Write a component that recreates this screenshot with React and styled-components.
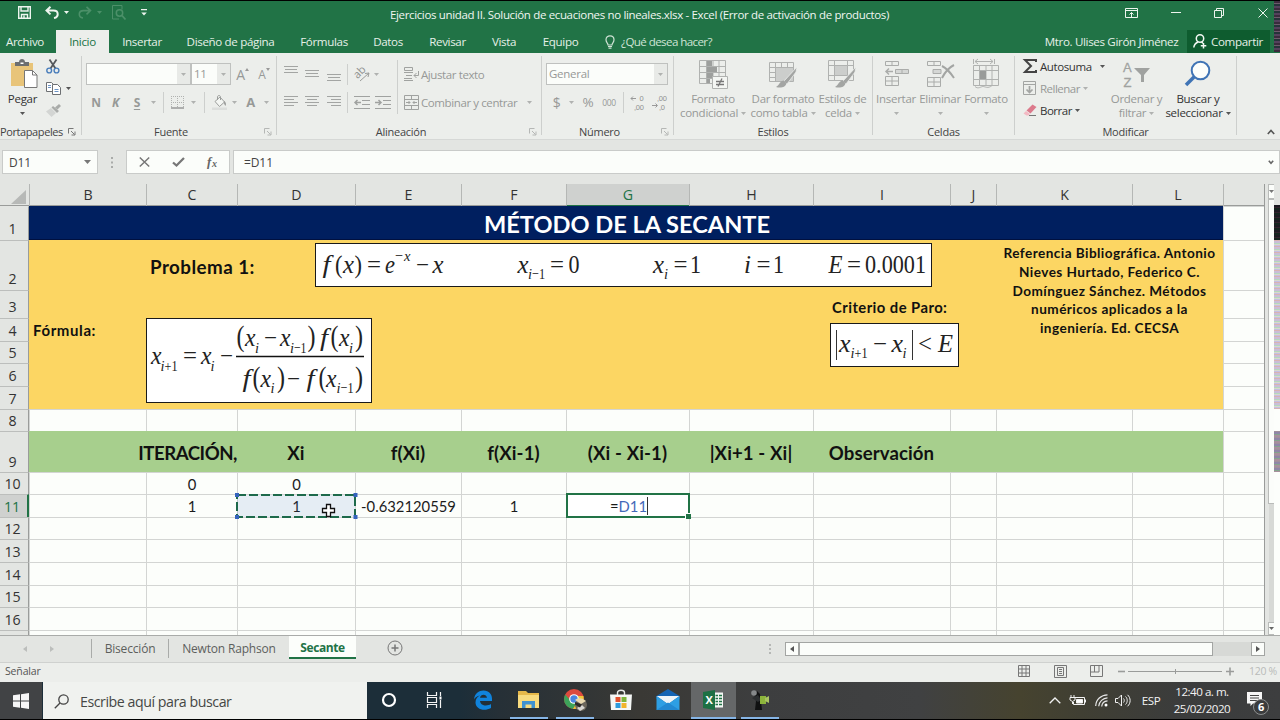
import styled, { createGlobalStyle, css } from "styled-components";

const GlobalStyle = createGlobalStyle`
  * {
    box-sizing: border-box;
  }

  body {
    margin: 0;
    background: #000;
    font-family: "Open Sans", "Noto Sans", sans-serif;
    overflow: hidden;
  }

  svg {
    display: block;
    flex: none;
    overflow: visible;
  }
`;

const GREEN = "#217346";
const RIBBON = "#eceeeb";
const CHROME = "#e3e5e2";
const DIM = "#979997";

const Screen = styled.div`
  position: relative;
  display: flex;
  flex-direction: column;
  width: 1280px;
  height: 720px;
  padding: 1px 0;
  overflow: hidden;
`;

/* A fixed-width place in a bar, with its content centred */
const Slot = styled.div`
  display: flex;
  align-items: center;
  justify-content: ${(p) => p.$align || "center"};
  flex: none;
  width: ${(p) => p.$w}px;
  height: ${(p) => (p.$h ? `${p.$h}px` : "auto")};
  margin-left: ${(p) => p.$ml || 0}px;
  white-space: nowrap;
`;

/* ---------- title bar and tabs ---------- */

const TitleBar = styled.div`
  display: flex;
  align-items: center;
  height: 29px;
  padding-bottom: 6px;
  background: ${GREEN};
  color: #f0f6f1;
`;

const WindowTitle = styled.div`
  flex: 1;
  padding: 4px 0 0 6px;
  font-size: 11.5px;
  letter-spacing: -0.35px;
  text-align: center;
  white-space: nowrap;
`;

const TabBar = styled.div`
  display: flex;
  height: 23px;
  background: ${GREEN};
  color: #e6f0e8;
  font-size: 11.6px;
  letter-spacing: -0.35px;
  line-height: 22px;
`;

const Tab = styled(Slot)`
  ${(p) =>
    p.$active &&
    css`
      background: ${RIBBON};
      color: ${GREEN};
    `}
`;

const TellMe = styled.div`
  display: flex;
  align-items: center;
  gap: 6px;
  flex: 1;
  padding-left: 11px;
  color: #cfe3d5;
  letter-spacing: -0.6px;
`;

const ShareButton = styled.div`
  display: flex;
  align-items: center;
  gap: 4px;
  width: 83px;
  margin: 0 10px 0 10px;
  padding-left: 6px;
  background: #0e5c2f;
`;

/* ---------- ribbon ---------- */

const Ribbon = styled.div`
  display: flex;
  height: 86px;
  background: ${RIBBON};
  color: #444;
  font-size: 11.5px;
  letter-spacing: -0.28px;
`;

const Group = styled.div`
  display: flex;
  flex-direction: column;
  flex: none;
  width: ${(p) => p.$w}px;
`;

const GroupBody = styled.div`
  display: flex;
  height: 71px;
  padding-left: ${(p) => p.$pl || 0}px;
`;

const GroupFooter = styled.div`
  display: flex;
  align-items: center;
  height: 15px;
  font-size: 11px;
  letter-spacing: ${(p) => p.$ls ?? -0.25}px;
  line-height: 15px;
`;

const GroupLabel = styled.div`
  flex: 1;
  text-align: center;
  white-space: nowrap;
`;

const Divider = styled.div`
  flex: none;
  width: 1px;
  height: ${(p) => p.$h || 79}px;
  margin-top: ${(p) => p.$mt ?? 3}px;
  background: #cdcfcd;
`;

const Stack = styled.div`
  display: flex;
  flex-direction: column;
  flex: none;
  gap: ${(p) => p.$gap ?? 6}px;
  width: ${(p) => (p.$w ? `${p.$w}px` : "auto")};
  padding-top: ${(p) => p.$pt ?? 10}px;
`;

const Line = styled.div`
  display: flex;
  align-items: center;
  gap: ${(p) => p.$gap || 0}px;
  height: 22px;
  color: ${(p) => (p.$on ? "#333" : DIM)};
  letter-spacing: ${(p) => p.$ls ?? -0.28}px;
  white-space: nowrap;
`;

const Combo = styled.div`
  display: flex;
  width: ${(p) => p.$w}px;
  height: 22px;
  border: 1px solid #bfc1bf;
  background: #fbfdfa;
`;

const ComboText = styled.div`
  flex: 1;
  padding-left: 2px;
  line-height: 20px;
  color: #979997;
`;

const ComboArrow = styled.div`
  display: flex;
  align-items: center;
  justify-content: center;
  width: 13px;
  background: #e8eae7;
`;

const Letter = styled.span`
  font-size: ${(p) => p.$size || 13}px;
  font-weight: ${(p) => (p.$bold ? 700 : 400)};
  font-style: ${(p) => (p.$italic ? "italic" : "normal")};
  text-decoration: ${(p) => (p.$under ? "underline" : "none")};
  text-underline-offset: 2px;
`;

const BigButton = styled.div`
  display: flex;
  flex-direction: column;
  align-items: center;
  flex: none;
  width: ${(p) => p.$w}px;
  padding-top: 6px;
  color: ${(p) => (p.$on ? "#333" : DIM)};
  line-height: 14px;
  white-space: nowrap;
`;

const BigIcon = styled.div`
  display: flex;
  align-items: center;
  height: 33px;
  padding-bottom: 3px;
`;

const ButtonLine = styled.div`
  display: flex;
  align-items: center;
  gap: 3px;
  height: 14px;
`;

/* ---------- formula bar ---------- */

const FormulaBar = styled.div`
  display: flex;
  height: 45px;
  padding: 10px 0 10px 2px;
  border-top: 1px solid #d6d8d6;
  background: ${CHROME};
  color: #444;
  font-size: 12px;
  letter-spacing: -0.1px;
`;

const Field = styled.div`
  display: flex;
  align-items: center;
  justify-content: space-between;
  width: ${(p) => (p.$w ? `${p.$w}px` : "auto")};
  flex: ${(p) => (p.$w ? "none" : 1)};
  height: 24px;
  margin-left: ${(p) => p.$ml || 0}px;
  padding: ${(p) => p.$pad};
  border: 1px solid #c9cbc9;
  background: #fbfdfa;
`;

/* ---------- sheet ---------- */

const COLS = "29px 117px 91px 118px 106px 105px 123px 124px 137px 46px 136px 91px 41px";
const ROWS = "34px 50px 28px 23px 22px 23px 23px 22px 41px 22px 23px 22px 23px 23px 22px 23px 5px";

const SheetArea = styled.div`
  display: flex;
  height: 451px;
  background: ${CHROME};
`;

const SheetBox = styled.div`
  width: 1265px;
  border-right: 1px solid #9a9c9a;
`;

const ColumnHeader = styled.div`
  display: grid;
  grid-template-columns: ${COLS};
  height: 22px;
  border-bottom: 1px solid #9a9c9a;
`;

const HeadCell = styled.div`
  border-left: 1px solid #b5b7b5;
  color: ${(p) => (p.$active ? GREEN : "#333")};
  font-size: 14.2px;
  line-height: 21px;
  text-align: center;
  ${(p) =>
    p.$active &&
    css`
      background: #cfd1cf;
      border-bottom: 2px solid ${GREEN};
    `}
`;

const Corner = styled.div`
  display: flex;
  align-items: flex-end;
  justify-content: flex-end;
  padding: 0 3px 3px 0;
`;

const Grid = styled.div`
  position: relative;
  display: grid;
  grid-template-columns: ${COLS};
  grid-template-rows: ${ROWS};
  height: 429px;
  background: #fcfefb;
  font-family: Lato, "Open Sans", sans-serif;
  font-size: 14.8px;
  color: #1b1b1b;
`;

const RowHead = styled.div`
  display: flex;
  align-items: flex-end;
  justify-content: center;
  grid-column: 1;
  grid-row: ${(p) => p.$row};
  padding-right: 3px;
  border-top: 1px solid ${(p) => (p.$row === 1 ? "transparent" : "#bcbebc")};
  border-right: ${(p) => (p.$active ? `2px solid ${GREEN}` : "1px solid #9a9c9a")};
  background: ${(p) => (p.$active ? "#cfd1cf" : CHROME)};
  color: ${(p) => (p.$active ? GREEN : "#333")};
  font-family: "Open Sans", sans-serif;
  font-size: 14.2px;
  line-height: ${(p) => (p.$row < 4 ? 22 : 20)}px;
  overflow: hidden;
`;

const Cell = styled.div`
  display: flex;
  align-items: center;
  justify-content: center;
  grid-column: ${(p) => p.$col};
  grid-row: ${(p) => p.$row};
  border-left: 1px solid #d3d5d3;
  border-top: 1px solid #d3d5d3;
  white-space: nowrap;
`;

const Band = styled.div`
  display: flex;
  align-items: center;
  justify-content: center;
  grid-column: 2 / 13;
  grid-row: ${(p) => p.$row};
  background: ${(p) => p.$bg};
`;

const SheetTitle = styled(Band)`
  padding: 3px 0 0 2px;
  border-bottom: 1px solid #00103f;
  color: #fff;
  font-size: 23.6px;
  font-weight: 700;
`;

const Caption = styled.div`
  grid-column: ${(p) => p.$col};
  grid-row: ${(p) => p.$row};
  padding: ${(p) => p.$pad};
  color: #111;
  font-size: ${(p) => p.$size}px;
  font-weight: 700;
  letter-spacing: ${(p) => p.$ls || 0}px;
  line-height: ${(p) => p.$lh || 22}px;
  text-align: ${(p) => p.$align || "left"};
  white-space: nowrap;
`;

const TableHead = styled.div`
  display: flex;
  align-items: center;
  justify-content: ${(p) => (p.$end ? "flex-end" : "center")};
  grid-column: ${(p) => p.$col};
  grid-row: 9;
  padding-top: 2px;
  color: #111;
  font-size: 18.6px;
  font-weight: 700;
  letter-spacing: ${(p) => (p.$end ? -0.45 : 0.1)}px;
  white-space: nowrap;
`;

/* Objects that float above the cells */
const Floating = styled.div`
  position: absolute;
  left: ${(p) => p.$x}px;
  top: ${(p) => p.$y - 206}px;
  width: ${(p) => p.$w}px;
  height: ${(p) => p.$h}px;
`;

const EquationBox = styled(Floating)`
  border: 1px solid #1a1a1a;
  background: #fff;
`;

const EditBox = styled(Floating)`
  display: flex;
  align-items: center;
  justify-content: center;
  padding: 1px 0 0 2px;
  border: 2px solid ${GREEN};
  background: #fff;

  &::after {
    content: "";
    position: absolute;
    right: -3px;
    bottom: -3px;
    width: 5px;
    height: 5px;
    background: ${GREEN};
    border: 1px solid #fff;
    border-width: 1px 0 0 1px;
  }
`;

const CellRef = styled.span`
  border-right: 1px solid #333;
  color: #4468b8;
`;

const ScrollColumn = styled.div`
  display: flex;
  flex-direction: column;
  width: 6px;
  margin-left: 3px;
`;

const ScrollPart = styled.div`
  display: flex;
  align-items: center;
  justify-content: center;
  height: ${(p) => p.$h}px;
  margin-left: ${(p) => (p.$track ? 1 : 0)}px;
  border: ${(p) => (p.$track ? "none" : "1px solid #b9bbb9")};
  border-right: none;
  background: ${(p) => (p.$track ? "#d7d9d6" : "#fbfdfa")};
`;

/* ---------- capture noise along the right edge ---------- */

const EdgeStrip = styled.div`
  position: absolute;
  right: 0;
  top: 1px;
  width: 6px;
  display: flex;
  flex-direction: column;
`;

const stripes = {
  plain: "transparent",
  white: "#fcfefb",
  dark: "repeating-linear-gradient(#1d1c22 0 2px, #33222c 2px 3px, #16261f 3px 5px)",
  busy: "repeating-linear-gradient(#3a2b3d 0 2px, #6d5a6b 2px 3px, #26333a 3px 5px, #54415c 5px 7px)",
  pale: "repeating-linear-gradient(#d9b3b3 0 1px, #c9bed8 1px 3px, #b3d8bd 3px 4px, #d8d8cc 4px 5px, #c4bfe2 5px 6px)",
  muted: "repeating-linear-gradient(#9f8f9c 0 1px, #8f86a8 1px 3px, #84a48c 3px 4px, #a88f9c 4px 6px)",
};

const Stripe = styled.div`
  height: ${(p) => p.$h}px;
  background: ${(p) => stripes[p.$kind]};
`;

/* ---------- sheet tabs and status ---------- */

const SheetTabs = styled.div`
  display: flex;
  height: 28px;
  border-top: 1px solid #a9aba9;
  border-bottom: 1px solid #cfd1cf;
  background: ${CHROME};
  color: #5d5f5d;
  font-size: 12px;
  letter-spacing: -0.18px;
  line-height: 22px;
`;

const SheetTab = styled(Slot)`
  height: 23px;
  padding-top: 2px;
  ${(p) =>
    p.$active &&
    css`
      border-bottom: 2px solid ${GREEN};
      background: #fcfefb;
      color: ${GREEN};
      font-weight: 700;
      letter-spacing: -0.4px;
    `}
`;

const TabRule = styled.div`
  width: 1px;
  height: 19px;
  margin-top: 3px;
  background: #a9aba9;
`;

const HScroll = styled.div`
  display: flex;
  width: 480px;
  height: 14px;
  margin-top: 6px;
  background: #d7d9d6;
`;

const HPart = styled.div`
  display: flex;
  align-items: center;
  justify-content: center;
  width: ${(p) => p.$w}px;
  margin-left: ${(p) => p.$ml || 0}px;
  border: 1px solid #a3a5a3;
  background: #fbfdfa;
`;

const StatusBar = styled.div`
  display: flex;
  align-items: center;
  height: 19px;
  padding-bottom: 3px;
  background: ${RIBBON};
  color: #555;
  font-size: 10.5px;
`;

const StatusText = styled.div`
  flex: 1;
  padding-left: 5px;
  letter-spacing: -0.15px;
`;

const Zoom = styled.div`
  width: 42px;
  padding-left: 11px;
  color: #b9bbb9;
  letter-spacing: -0.3px;
  white-space: nowrap;
`;

/* ---------- taskbar ---------- */

const Taskbar = styled.div`
  display: flex;
  height: 37px;
  background: linear-gradient(
    90deg,
    #1c2e39 0 460px,
    #263037 500px,
    #3a3935 640px,
    #3d3e3f 760px,
    #404142 920px,
    #46432f 1020px,
    #403f33 1080px,
    #3b3c3c 1180px,
    #3d3e3f 1280px
  );
`;

const StartButton = styled(Slot)`
  background: #414345;
`;

const SearchBox = styled.div`
  display: flex;
  align-items: center;
  gap: 11px;
  width: 324px;
  margin-left: 1px;
  padding: 1px 0 0 11px;
  background: #f0f2ef;
  color: #454745;
  font-size: 14.2px;
  letter-spacing: -0.45px;
`;

const TaskItem = styled(Slot)`
  background: ${(p) => (p.$active ? "#656768" : "none")};
  border-bottom: 2px solid ${(p) => (p.$open ? "#86b5e6" : "transparent")};
`;

const Tray = styled.div`
  display: flex;
  flex: 1;
  justify-content: flex-end;
  align-items: center;
  color: #f2f2f2;
  font-size: 11.6px;
  letter-spacing: -0.5px;
`;

const Clock = styled.div`
  display: flex;
  flex-direction: column;
  align-items: center;
  width: 72px;
  padding-bottom: 1px;
  line-height: 17px;
  white-space: nowrap;
`;

/* ---------- drawings ---------- */

const Svg = ({ w, h, color = "currentColor", sw = 1, children }) => (
  <svg
    width={w}
    height={h}
    viewBox={`0 0 ${w} ${h}`}
    fill="none"
    stroke={color}
    strokeWidth={sw}
  >
    {children}
  </svg>
);

const Arrow = ({ color = "#b0b2b0" }) => (
  <svg width="5" height="3" viewBox="0 0 5 3">
    <path d="M0 0h5L2.500 3z" fill={color} />
  </svg>
);

const Launcher = ({ color = "#999" }) => (
  <Svg w={8} h={8} color={color}>
    <path d="M.5 5.500v-5h5M3 3l3.500 3.500M7 3.500v3.500H3.500" />
  </Svg>
);

const Bars = ({ rows }) => (
  <Svg w={14} h={18} color="#a3a5a3">
    {rows.map(([x1, x2, y]) => (
      <path key={y} d={`M${x1} ${y + 0.5}H${x2}`} />
    ))}
  </Svg>
);

const Brush = () => (
  <g stroke="none">
    <path d="M28 7L15 21l3 3 9-12z" fill="#a3a5a3" stroke="#ecefec" strokeWidth=".8" />
    <path d="M15 20.500c-4 0-4 4-8 6.500 5 1.500 10 0 10.500-4z" fill="#a3a5a3" />
  </g>
);

const Indent = ({ flip }) => (
  <Svg w={16} h={13} color="#a0a2a0">
    <path d="M0 .5h16M8 4.500h8M8 8.500h8M0 12.500h16" />
    <path
      d={flip ? "M0 6.500h6M3.500 4l2.500 2.500L3.500 9" : "M1 6.500h6M3.500 4L1 6.500 3.500 9"}
      strokeWidth="1.500"
    />
  </Svg>
);

/* text runs of a formula: [text, x, baseline, size, width, upright] */
const Equation = ({ x, y, w, h, runs, children }) => (
  <EquationBox $x={x} $y={y} $w={w} $h={h}>
    <svg
      width={w - 2}
      height={h - 2}
      viewBox={`${x + 1} ${y + 1} ${w - 2} ${h - 2}`}
      fontFamily="'Liberation Serif', serif"
      fill="#222"
    >
      {runs.map(([t, tx, ty, size, len, upright], i) => (
        <text
          key={i}
          x={tx}
          y={ty}
          fontSize={size}
          fontStyle={upright ? "normal" : "italic"}
          textLength={len}
          lengthAdjust="spacingAndGlyphs"
        >
          {t}
        </text>
      ))}
      {children}
    </svg>
  </EquationBox>
);

const PROBLEM = [
  ["f", 322.5, 272.5, 26, 8],
  ["(", 335, 272.5, 26, 7.5, true],
  ["x", 343, 272.5, 25, 11],
  [")", 354.5, 272.5, 26, 7.5, true],
  ["=", 367, 272.5, 25, 14, true],
  ["e", 385, 272.5, 25, 10],
  ["−", 395, 260.5, 16, 8, true],
  ["x", 404, 260.5, 15, 6.5],
  ["−", 416, 272.5, 25, 13, true],
  ["x", 432.5, 272.5, 25, 11],
  ["x", 517.5, 272.5, 25, 11],
  ["i", 528, 279, 15.5, 4],
  ["−1", 532, 279, 15.5, 13, true],
  ["=", 550, 272.5, 25, 14, true],
  ["0", 568.5, 272.5, 25, 11, true],
  ["x", 653, 272.5, 25, 11],
  ["i", 664, 279, 15.5, 4],
  ["=", 673.5, 272.5, 25, 14, true],
  ["1", 690, 272.5, 25, 11, true],
  ["i", 744, 272.5, 25, 7],
  ["=", 756.5, 272.5, 25, 14, true],
  ["1", 773, 272.5, 25, 11, true],
  ["E", 828.5, 272.5, 25, 14],
  ["=", 847, 272.5, 25, 14, true],
  ["0.0001", 865, 272.5, 25, 61, true],
];

const SECANT = [
  ["x", 151, 364, 25, 10.5],
  ["i", 160.5, 371, 15.5, 4],
  ["+1", 164.5, 371, 15.5, 13, true],
  ["=", 183, 364, 25, 14, true],
  ["x", 201, 364, 25, 10.5],
  ["i", 210.5, 371, 15.5, 4],
  ["−", 220, 364, 25, 13, true],
  ["(", 236.5, 346, 29, 8, true],
  ["x", 245, 346, 25, 10.5],
  ["i", 255, 352.5, 15.5, 4],
  ["−", 264, 346, 25, 13, true],
  ["x", 280, 346, 25, 10.5],
  ["i", 290, 352.5, 15.5, 4],
  ["−1", 294, 352.5, 15.5, 12.5, true],
  [")", 307.5, 346, 29, 8, true],
  ["f", 320, 346, 26, 8],
  ["(", 330.5, 346, 29, 8, true],
  ["x", 339, 346, 25, 10.5],
  ["i", 349, 352.5, 15.5, 4],
  [")", 355, 346, 29, 8, true],
  ["f", 242.5, 386.5, 26, 8],
  ["(", 252.5, 386.5, 29, 8, true],
  ["x", 260.5, 386.5, 25, 10.5],
  ["i", 270.5, 393, 15.5, 4],
  [")", 277, 386.5, 29, 8, true],
  ["−", 287, 386.5, 25, 13, true],
  ["f", 306.5, 386.5, 26, 8],
  ["(", 318.5, 386.5, 29, 8, true],
  ["x", 326, 386.5, 25, 10.5],
  ["i", 336.5, 393, 15.5, 4],
  ["−1", 340.5, 393, 15.5, 13, true],
  [")", 355, 386.5, 29, 8, true],
];

const STOP = [
  ["x", 839, 352, 26, 11.5],
  ["i", 850.5, 358, 15.5, 4],
  ["+1", 854.5, 358, 15.5, 13, true],
  ["−", 873, 352, 25, 14, true],
  ["x", 891.5, 352, 26, 11.5],
  ["i", 902.5, 358, 15.5, 4],
  ["<", 918, 352, 25, 14, true],
  ["E", 938, 352, 26, 15],
];

/* ---------- content ---------- */

const LETTERS = ["B", "C", "D", "E", "F", "G", "H", "I", "J", "K", "L"];
const OPEN_ROWS = [8, 10, 11, 12, 13, 14, 15, 16, 17];
const VALUES = {
  "10-3": "0",
  "10-4": "0",
  "11-3": "1",
  "11-4": "1",
  "11-5": "-0.632120559",
  "11-6": "1",
};
const HEADINGS = ["ITERACIÓN,", "Xi", "f(Xi)", "f(Xi-1)", "(Xi - Xi-1)", "|Xi+1 - Xi|", "Observación"];

const TABS = [
  ["Archivo", 50, 0],
  ["Inicio", 53, 6],
  ["Insertar", 66, 0],
  ["Diseño de página", 111, 0],
  ["Fórmulas", 76, 0],
  ["Datos", 52, 0],
  ["Revisar", 67, 0],
  ["Vista", 46, 0],
  ["Equipo", 67, 0],
];

const QuickAccess = () => (
  <>
    <Slot $w={15} $ml={17}>
      <Svg w={13} h={13} color="#eef5ef" sw={1.4}>
        <path d="M.7.700h11.600v11.600H.7zM3 1v4h7V1M3.500 12V8.500h6V12M6 9.500v2.500" />
      </Svg>
    </Slot>
    <Slot $w={16} $ml={12}>
      <Svg w={14} h={13} color="#eef5ef" sw={2}>
        <path d="M5.500.800L1.500 4.600l4 3.800M2 4.600h6.500c5.500 0 5.500 6.500.5 7.400" />
      </Svg>
    </Slot>
    <Slot $w={12}>
      <Arrow color="#eef5ef" />
    </Slot>
    <Slot $w={15} $ml={5}>
      <Svg w={14} h={13} color="#4c9069" sw={1.6}>
        <path d="M8.500.800l4 3.800-4 3.800M12 4.600H5.500c-5.500 0-5.500 6.500-.5 7.400" />
      </Svg>
    </Slot>
    <Slot $w={14}>
      <Arrow color="#4c9069" />
    </Slot>
    <Slot $w={15} $ml={5}>
      <Svg w={14} h={15} color="#4c9069">
        <path d="M10 4.500V.500H.5v13.500H7" />
        <circle cx="7.500" cy="8" r="3.200" strokeWidth="1.500" />
        <path d="M10 10.500l3.500 4" strokeWidth="1.800" />
      </Svg>
    </Slot>
    <Slot $w={12} $ml={12}>
      <Svg w={6} h={7} color="none">
        <path d="M0 0h6v1.300H0zM.3 3.500h5.500L3 6.500z" fill="#eef5ef" />
      </Svg>
    </Slot>
  </>
);

const ClipboardGroup = () => (
  <Group $w={81}>
    <GroupBody>
      <BigButton $w={45} $on>
        <BigIcon>
          <Svg w={28} h={30} color="none">
            <path d="M2 4h22v23H2z" fill="#e8c479" />
            <path d="M6 3h4c0-4 6-4 6 0h4v4H6z" fill="#6c6e70" />
            <path d="M11.500 3.500h3v1.500h-3z" fill="#fff" />
            <path d="M15.500 11.500h8l4.500 4.500v12.500H15.500z" fill="#fff" stroke="#777" />
            <path d="M23.500 11.500V16H28" stroke="#777" />
          </Svg>
        </BigIcon>
        <ButtonLine>Pegar</ButtonLine>
        <ButtonLine>
          <Arrow color="#555" />
        </ButtonLine>
      </BigButton>
      <Stack $pt={2} $gap={0}>
        <Line>
          <Slot $w={16}>
            <Svg w={14} h={15} color="#55585c" sw={1.4}>
              <path d="M3.500.500l6 9M10.500.500l-6 9" strokeWidth="1.800" />
              <circle cx="3.200" cy="11.500" r="2.400" stroke="#4a7ebb" />
              <circle cx="10.500" cy="11.500" r="2.400" stroke="#4a7ebb" />
            </Svg>
          </Slot>
        </Line>
        <Line>
          <Slot $w={16}>
            <Svg w={15} h={14} color="#6d7073">
              <path d="M.5 1.500h5l2 2v7H.5z" fill="#fff" />
              <path d="M6.500 3.500h5l3 3v7h-8z" fill="#fff" />
              <path d="M2 4.500h3M2 6.500h3M8.500 8.500h4M8.500 10.500h4" stroke="#6a93c4" />
            </Svg>
          </Slot>
          <Slot $w={14}>
            <Arrow color="#555" />
          </Slot>
        </Line>
        <Line>
          <Slot $w={16}>
            <Svg w={15} h={13} color="none">
              <path d="M0 7.500L5 4l5 5-4.500 4z" fill="#d3d5d3" />
              <path d="M5.500 3.500L7 2l6 5-2 2z" fill="#a9aba9" />
              <path d="M9 3.500L13 0l2 2-3.500 3.500z" fill="#a9aba9" />
            </Svg>
          </Slot>
        </Line>
      </Stack>
    </GroupBody>
    <GroupFooter $ls={-0.4}>
      <GroupLabel>Portapapeles</GroupLabel>
      <Slot $w={18}>
        <Launcher color="#777" />
      </Slot>
    </GroupFooter>
  </Group>
);

const FontGroup = () => (
  <Group $w={194}>
    <GroupBody $pl={4}>
      <Stack>
        <Line>
          <Combo $w={105}>
            <ComboText />
            <ComboArrow>
              <Arrow />
            </ComboArrow>
          </Combo>
          <Combo $w={40}>
            <ComboText>11</ComboText>
            <ComboArrow>
              <Arrow />
            </ComboArrow>
          </Combo>
          <Slot $w={23}>
            <Letter $size={14}>A</Letter>
            <Svg w={4} h={12} color="none">
              <path d="M0 3l2-3 2 3z" fill="#999" />
            </Svg>
          </Slot>
          <Slot $w={20}>
            <Letter $size={12}>A</Letter>
            <Svg w={4} h={12} color="none">
              <path d="M0 0h4L2 3z" fill="#999" />
            </Svg>
          </Slot>
        </Line>
        <Line>
          <Slot $w={20}>
            <Letter $size={12} $bold>N</Letter>
          </Slot>
          <Slot $w={19}>
            <Letter $size={12} $bold $italic>K</Letter>
          </Slot>
          <Slot $w={24}>
            <Letter $size={12} $bold $under>S</Letter>
          </Slot>
          <Slot $w={8}>
            <Arrow />
          </Slot>
          <Slot $w={13}>
            <Divider $h={21} $mt={0} />
          </Slot>
          <Slot $w={15}>
            <Svg w={13} h={13} color="#b0b2b0">
              <path d="M.5 0v11M6.500 0v11M12.500 0v11M0 .5h13M0 6.500h13" strokeDasharray="1 1" />
              <path d="M0 12h13" stroke="#999" strokeWidth="1.500" />
            </Svg>
          </Slot>
          <Slot $w={16}>
            <Arrow />
          </Slot>
          <Slot $w={7}>
            <Divider $h={21} $mt={0} />
          </Slot>
          <Slot $w={22}>
            <Svg w={15} h={15} color="#9c9e9c">
              <path d="M3 6.500L8 2l4.500 5-5 4.500z" fill="#f4f6f3" />
              <path d="M5.500 5V2c0-2 3-2 3 0v3" />
              <path d="M12 6c2 1 2.500 3 1.500 5-1-1-2-3-1.500-5z" fill="#9c9e9c" stroke="none" />
              <path d="M0 12.500h15V15H0z" fill="#dcdedc" stroke="none" />
            </Svg>
          </Slot>
          <Slot $w={8}>
            <Arrow />
          </Slot>
          <Slot $w={25}>
            <Letter $size={13} $bold>A</Letter>
          </Slot>
          <Slot $w={7}>
            <Arrow />
          </Slot>
        </Line>
      </Stack>
    </GroupBody>
    <GroupFooter>
      <GroupLabel>Fuente</GroupLabel>
      <Slot $w={16}>
        <Launcher color="#b5b7b5" />
      </Slot>
    </GroupFooter>
  </Group>
);

const AlignGroup = () => (
  <Group $w={264}>
    <GroupBody $pl={3}>
      <Stack $w={117}>
        <Line>
          <Slot $w={21}>
            <Bars rows={[[0, 14, 1], [1, 13, 4], [0, 14, 7]]} />
          </Slot>
          <Slot $w={22}>
            <Bars rows={[[0, 14, 5], [1, 13, 8], [0, 14, 11]]} />
          </Slot>
          <Slot $w={21}>
            <Bars rows={[[0, 14, 9], [1, 13, 12], [0, 14, 15]]} />
          </Slot>
          <Slot $w={6}>
            <Divider $h={21} $mt={0} />
          </Slot>
          <Slot $w={23}>
            <svg width="16" height="15" viewBox="0 0 16 15">
              <text x="1" y="10" fontSize="11" fill="#8f918f" transform="rotate(-45 5 8)">
                ab
              </text>
              <path d="M6 14l9-8M15 6l-1 4M15 6l-4 .5" stroke="#9a9c9a" fill="none" />
            </svg>
          </Slot>
          <Slot $w={6}>
            <Arrow />
          </Slot>
        </Line>
        <Line>
          <Slot $w={21}>
            <Bars rows={[[0, 14, 3], [0, 10, 6], [0, 14, 9], [0, 10, 12]]} />
          </Slot>
          <Slot $w={22}>
            <Bars rows={[[0, 14, 3], [2, 12, 6], [0, 14, 9], [2, 12, 12]]} />
          </Slot>
          <Slot $w={21}>
            <Bars rows={[[0, 14, 3], [4, 14, 6], [0, 14, 9], [4, 14, 12]]} />
          </Slot>
          <Slot $w={6}>
            <Divider $h={21} $mt={0} />
          </Slot>
          <Slot $w={24}>
            <Indent />
          </Slot>
          <Slot $w={18}>
            <Indent flip />
          </Slot>
        </Line>
      </Stack>
      <Divider $h={54} $mt={7} />
      <Stack>
        <Line $gap={2} $ls={-0.4}>
          <Slot $w={16} $ml={5}>
            <Svg w={15} h={14} color="#a0a2a0">
              <path d="M.5.500h8v3h-8zM0 5.500h9M2 8.500h6M0 11.500h8M0 13.500h9" />
              <path d="M14.500 4v4.500H10M12.500 6L10 8.500l2.500 2.500" />
            </Svg>
          </Slot>
          Ajustar texto
        </Line>
        <Line $gap={2} $ls={-0.4}>
          <Slot $w={16} $ml={5}>
            <Svg w={15} h={15} color="#a0a2a0">
              <path d="M.5.500h14v14H.5zM0 4.500h15M0 10.500h15M7.500 1v3M7.500 11v3M2 7.500h4M9 7.500h4M4.500 6L6 7.500 4.500 9M10.500 6L9 7.500l1.500 1.500" />
            </Svg>
          </Slot>
          Combinar y centrar
          <Slot $w={20}>
            <Arrow />
          </Slot>
        </Line>
      </Stack>
    </GroupBody>
    <GroupFooter>
      <GroupLabel>Alineación</GroupLabel>
      <Slot $w={16}>
        <Launcher color="#b5b7b5" />
      </Slot>
    </GroupFooter>
  </Group>
);

const Decimals = ({ top, bottom, flip }) => (
  <svg
    width="15"
    height="15"
    viewBox="0 0 15 15"
    fill="#8f918f"
    fontFamily="'Liberation Sans', sans-serif"
    fontSize="7.500"
  >
    <text x={flip ? 5 : 9.5} y="5.500">{top}</text>
    <text x={flip ? 7 : 4} y="14.500">{bottom}</text>
    <path
      d={flip ? "M0 10.500h5M3.500 8.500l2 2-2 2" : "M1 3.500h5M3 1.500l-2 2 2 2"}
      fill="none"
      stroke="#999"
    />
  </svg>
);

const NumberGroup = () => (
  <Group $w={131}>
    <GroupBody $pl={4}>
      <Stack>
        <Combo $w={122}>
          <ComboText>General</ComboText>
          <ComboArrow>
            <Arrow />
          </ComboArrow>
        </Combo>
        <Line>
          <Slot $w={21}>
            <Letter $size={14}>$</Letter>
          </Slot>
          <Slot $w={8}>
            <Arrow />
          </Slot>
          <Slot $w={26}>
            <Letter $size={13.5}>%</Letter>
          </Slot>
          <Slot $w={16}>
            <Letter $size={8.5}>000</Letter>
          </Slot>
          <Slot $w={12}>
            <Divider $h={21} $mt={0} />
          </Slot>
          <Slot $w={17}>
            <Decimals top="0" bottom=",00" />
          </Slot>
          <Slot $w={26}>
            <Decimals top=",00" bottom=",0" flip />
          </Slot>
        </Line>
      </Stack>
    </GroupBody>
    <GroupFooter>
      <GroupLabel>Número</GroupLabel>
      <Slot $w={16}>
        <Launcher color="#b5b7b5" />
      </Slot>
    </GroupFooter>
  </Group>
);

const StylesGroup = () => (
  <Group $w={198}>
    <GroupBody>
      <BigButton $w={78}>
        <BigIcon>
          <Svg w={29} h={29} color="#b0b2b0">
            <path d="M.5.500h26v23H.5zM7.500 0v24M14 0v24M20 0v24M0 6.500h27M0 12.500h27M0 18.500h27" />
            <path d="M8 1h5v5H8zM8 7h10v5H8zM8 13h6v5H8zM8 19h3v4H8z" fill="#9d9f9d" stroke="none" />
            <path d="M13.500 16.500h15v12h-15z" fill="#f4f6f3" />
            <path d="M17 21.500h8M17 24.500h8M23 18.500l-4 8" stroke="#777" strokeWidth="1.300" />
          </Svg>
        </BigIcon>
        <ButtonLine>Formato</ButtonLine>
        <ButtonLine>
          condicional <Arrow />
        </ButtonLine>
      </BigButton>
      <BigButton $w={62}>
        <BigIcon>
          <Svg w={29} h={29} color="#b0b2b0">
            <path d="M.5 2.500h24v19H.5zM6.500 2v20M12.500 2v20M18.500 2v20M0 7.500h25M0 12.500h25M0 17.500h25" />
            <path d="M7 8h17v13H7z" fill="#cccecc" stroke="none" />
            <Brush />
          </Svg>
        </BigIcon>
        <ButtonLine>Dar formato</ButtonLine>
        <ButtonLine>
          como tabla <Arrow />
        </ButtonLine>
      </BigButton>
      <BigButton $w={57}>
        <BigIcon>
          <Svg w={29} h={29} color="#b0b2b0">
            <path d="M.5.500h25v20H.5zM6.500 0v21M19.500 0v21M0 5.500h26M0 15.500h26" />
            <path d="M7 6h12v9H7z" fill="#cccecc" stroke="none" />
            <Brush />
          </Svg>
        </BigIcon>
        <ButtonLine>Estilos de</ButtonLine>
        <ButtonLine>
          celda <Arrow />
        </ButtonLine>
      </BigButton>
    </GroupBody>
    <GroupFooter>
      <GroupLabel>Estilos</GroupLabel>
    </GroupFooter>
  </Group>
);

const CellsGroup = () => (
  <Group $w={141}>
    <GroupBody>
      <BigButton $w={46}>
        <BigIcon>
          <Svg w={26} h={28} color="#aaacaa">
            <path d="M2.500 1.500h13v4h-13zM9 1v5M2.500 16.500h13v9h-13zM9 16v10M2 21h14" />
            <path d="M12.500 9.500h13v4h-13zM19 9v5" fill="#d5d7d5" />
            <path d="M3 11.500h7M6 8.500l-3 3 3 3" strokeWidth="1.500" />
          </Svg>
        </BigIcon>
        <ButtonLine>Insertar</ButtonLine>
        <ButtonLine>
          <Arrow />
        </ButtonLine>
      </BigButton>
      <BigButton $w={42}>
        <BigIcon>
          <Svg w={28} h={28} color="#aaacaa">
            <path d="M1.500 1.500h13v4h-13zM8 1v5M1.500 17.500h13v9h-13zM8 17v10M1 22h14" />
            <path d="M7 9.500h8v4H7z" fill="#d5d7d5" />
            <path d="M16 6c4 2 8 6 12 12M28 5c-4 2-9 7-12 13" strokeWidth="2" stroke="#a3a5a3" />
          </Svg>
        </BigIcon>
        <ButtonLine>Eliminar</ButtonLine>
        <ButtonLine>
          <Arrow />
        </ButtonLine>
      </BigButton>
      <BigButton $w={50}>
        <BigIcon>
          <Svg w={28} h={30} color="#b0b2b0">
            <path d="M1.500 0v5M22.500 0v5M3 2.500h18M6 0L3 2.500 6 5M18 0l3 2.500L18 5" />
            <path d="M1.500 6.500h25v20H1.500zM7.500 6v20M14 6v20M20 6v20M1 11.500h26M1 20.500h26" />
            <path d="M8 12h6v8H8z" fill="#999b99" stroke="none" />
            <path d="M3 27.500c3 3 6 0 8 0s5 2.500 9-1" />
          </Svg>
        </BigIcon>
        <ButtonLine>Formato</ButtonLine>
        <ButtonLine>
          <Arrow />
        </ButtonLine>
      </BigButton>
    </GroupBody>
    <GroupFooter>
      <GroupLabel>Celdas</GroupLabel>
    </GroupFooter>
  </Group>
);

const EditGroup = () => (
  <Group $w={221}>
    <GroupBody $pl={7}>
      <Stack $w={86} $pt={2} $gap={0}>
        <Line $on $gap={3} $ls={-0.4}>
          <Slot $w={15}>
            <Svg w={14} h={14} color="#444" sw={2}>
              <path d="M13 3V1H2l6 6-6 6h11v-2" />
            </Svg>
          </Slot>
          Autosuma
          <Slot $w={16}>
            <Arrow color="#555" />
          </Slot>
        </Line>
        <Line $gap={3} $ls={-0.5}>
          <Slot $w={15}>
            <Svg w={13} h={14} color="#a3a5a3">
              <path d="M.5.500h12v13H.5zM0 3.500h13" />
              <path d="M6.500 5v6M3.500 8.500l3 3 3-3" strokeWidth="1.700" />
            </Svg>
          </Slot>
          Rellenar
          <Arrow />
        </Line>
        <Line $on $gap={3} $ls={-0.5}>
          <Slot $w={15}>
            <Svg w={14} h={12} color="none">
              <path d="M3.500 6.500l6-6 4 2.500-6 6.500z" fill="#dc7a8c" />
              <path d="M3 7L.5 9.500l3 2h2L7 10z" fill="#f3b9c3" />
              <path d="M6 11.500h7" stroke="#777" />
            </Svg>
          </Slot>
          Borrar
          <Arrow color="#555" />
        </Line>
      </Stack>
      <BigButton $w={57}>
        <BigIcon>
          <svg
            width="29"
            height="28"
            viewBox="0 0 29 28"
            fill="#a0a2a0"
            fontFamily="'Liberation Sans', sans-serif"
            fontSize="13"
          >
            <text x="1" y="11.500" stroke="#a0a2a0" strokeWidth=".3">A</text>
            <text x="1.500" y="26.500" stroke="#a0a2a0" strokeWidth=".3">Z</text>
            <path d="M12 8h16l-6 7v7h-3v-7z" />
          </svg>
        </BigIcon>
        <ButtonLine>Ordenar y</ButtonLine>
        <ButtonLine>
          filtrar <Arrow />
        </ButtonLine>
      </BigButton>
      <BigButton $w={66} $on>
        <BigIcon>
          <Svg w={26} h={27} color="#3f74b5" sw={2}>
            <circle cx="15.500" cy="9.500" r="8.800" fill="#fcfefb" />
            <path d="M9 16L1 24" strokeWidth="3.500" />
          </Svg>
        </BigIcon>
        <ButtonLine>Buscar y</ButtonLine>
        <ButtonLine>
          seleccionar <Arrow color="#555" />
        </ButtonLine>
      </BigButton>
    </GroupBody>
    <GroupFooter>
      <GroupLabel>Modificar</GroupLabel>
    </GroupFooter>
  </Group>
);

const Worksheet = () => (
  <SheetArea>
    <SheetBox>
      <ColumnHeader>
        <Corner>
          <Svg w={15} h={14} color="none">
            <path d="M15 0v14H0z" fill="#b7b9b7" />
          </Svg>
        </Corner>
        {LETTERS.map((letter) => (
          <HeadCell key={letter} $active={letter === "G"}>
            {letter}
          </HeadCell>
        ))}
        <HeadCell />
      </ColumnHeader>
      <Grid>
        {Array.from({ length: 17 }, (_, i) => (
          <RowHead key={i} $row={i + 1} $active={i === 10}>
            {i < 16 ? i + 1 : ""}
          </RowHead>
        ))}
        {OPEN_ROWS.map((row) =>
          LETTERS.map((letter, i) => (
            <Cell key={letter + row} $row={row} $col={i + 2}>
              {VALUES[`${row}-${i + 2}`]}
            </Cell>
          ))
        )}
        {Array.from({ length: 17 }, (_, i) => (
          <Cell key={i} $row={i + 1} $col={13} />
        ))}

        <SheetTitle $row="1" $bg="#001f5f">
          MÉTODO DE LA SECANTE
        </SheetTitle>
        <Band $row="2 / 8" $bg="#fcd663" />
        <Band $row="9" $bg="#a7cf8d" />

        <Caption $col="3" $row="2" $pad="16px 0 0 4px" $size={18.8} $ls={0.45}>
          Problema 1:
        </Caption>
        <Caption $col="2" $row="4" $pad="1px 0 0 4px" $size={15} $ls={0.6}>
          Fórmula:
        </Caption>
        <Caption $col="9" $row="3" $pad="6px 0 0 19px" $size={14.8} $ls={0.45}>
          Criterio de Paro:
        </Caption>
        <Caption $col="11 / 13" $row="2 / 8" $pad="4px 0 0" $size={13.6} $ls={0.44} $lh={18.8} $align="center">
          Referencia Bibliográfica. Antonio
          <br />
          Nieves Hurtado, Federico C.
          <br />
          Domínguez Sánchez. Métodos
          <br />
          numéricos aplicados a la
          <br />
          ingeniería. Ed. CECSA
        </Caption>
        {HEADINGS.map((text, i) => (
          <TableHead key={text} $col={i + 3} $end={i === 0}>
            {text}
          </TableHead>
        ))}

        <Equation x={315} y={243} w={617} h={44} runs={PROBLEM} />
        <Equation x={146} y={318} w={226} h={85} runs={SECANT}>
          <path d="M236 356.500H364" stroke="#111" strokeWidth="1.300" />
        </Equation>
        <Equation x={830} y={323} w={129} h={44} runs={STOP}>
          <path d="M836.500 330v30M912.500 330v30" stroke="#333" />
        </Equation>

        <Floating $x={234} $y={491} $w={125} $h={29}>
          <svg width="125" height="29" viewBox="0 0 125 29">
            <path d="M3 4h118v22H3z" fill="rgba(68,114,196,.12)" />
            <path
              d="M3 4h118v22H3z"
              fill="none"
              stroke="#1d6a4b"
              strokeWidth="2"
              strokeDasharray="9 3"
            />
            <path d="M1 2h4v4H1zM119.500 2h4v4h-4zM1 24h4v4H1zM119.500 24h4v4h-4z" fill="#3563bd" />
          </svg>
        </Floating>
        <EditBox $x={566} $y={493} $w={124} $h={25}>
          =<CellRef>D11</CellRef>
        </EditBox>
        <Floating $x={321} $y={503} $w={15} $h={15}>
          <Svg w={15} h={15} color="#111">
            <path
              d="M5.500 1.500h4v4h4v4h-4v4h-4v-4h-4v-4h4z"
              fill="#fff"
              strokeWidth="1.300"
            />
          </Svg>
        </Floating>
      </Grid>
    </SheetBox>
    <ScrollColumn>
      <ScrollPart $h={15}>
        <Arrow color="#777" />
      </ScrollPart>
      <ScrollPart $h={305} />
      <ScrollPart $h={118} $track />
      <ScrollPart $h={13}>
        <Arrow color="#666" />
      </ScrollPart>
    </ScrollColumn>
  </SheetArea>
);

const TaskIcons = () => (
  <>
    <TaskItem $w={44}>
      <Svg w={16} h={16} color="#fff" sw={2.2}>
        <circle cx="8" cy="8" r="6" />
      </Svg>
    </TaskItem>
    <TaskItem $w={46}>
      <Svg w={16} h={16} color="#f4f4f4" sw={1.2}>
        <path d="M1.500 0v3.500h9V0M1.500 5.500h9v5h-9zM1.500 16v-3.500h9V16M14.500 0v4M14.500 8v8" />
        <path d="M13.500 4.500h2v3h-2z" fill="#fff" stroke="none" />
      </Svg>
    </TaskItem>
    <TaskItem $w={51}>
      <Svg w={20} h={20} color="none">
        <path
          d="M1 9.500C1.500 3.500 6 .5 10.500.500c5.500 0 8.500 4 8.500 8v2.500H7c.5 5 7 5.500 11 3v4C11 22 2.500 19 2.500 12.500c0-3.500 2-6 4.500-7C4 6 2 7.500 1 9.500zM7 7.800h7C13.500 3.500 7.500 3.800 7 7.800z"
          fill="#1083dc"
        />
      </Svg>
    </TaskItem>
    <Slot $w={2} />
    <TaskItem $w={38} $open>
      <Svg w={22} h={19} color="none">
        <path d="M0 1h8l2 2h11v15H0z" fill="#e6b84a" />
        <path d="M0 5h21v13H0z" fill="#f8db7f" />
        <path d="M4 18v-7h13v7h-3.500v-3.500h-6V18z" fill="#3f92d2" />
      </Svg>
    </TaskItem>
    <Slot $w={8} />
    <TaskItem $w={38} $open>
      <Svg w={24} h={24} color="none">
        <circle cx="11" cy="11" r="10" fill="#dc4b3e" />
        <path d="M2.200 6.500A10 10 0 0 0 10 21l4.500-7.500-7-1z" fill="#3da35a" />
        <path d="M20.500 8H11l3.500 6L10 21c6 .5 12-5 10.500-13z" fill="#f0c63b" />
        <circle cx="11" cy="11" r="4.800" fill="#fff" />
        <circle cx="11" cy="11" r="3.700" fill="#4a86e0" />
        <circle cx="18" cy="17" r="6" fill="#6b665c" />
        <path d="M12 12c3-3 8-2 11 1l-5 3z" fill="#e9d9b0" />
        <path d="M14 20l5-3 3 3-5 3z" fill="#d8d6d2" />
        <path d="M12 14l7 2.500-2 3-5-3z" fill="#2d2b2a" />
      </Svg>
    </TaskItem>
    <Slot $w={6} />
    <TaskItem $w={42}>
      <Svg w={22} h={22} color="none">
        <path d="M7.500 6V3.500c0-3 7-3 7 0V6" stroke="#e9ebe9" strokeWidth="1.400" />
        <path d="M0 5.500h22L21 21H1z" fill="#f5f7f5" />
        <path d="M5.500 8h5v5h-5z" fill="#e2502d" />
        <path d="M11.500 8h5v5h-5z" fill="#7db53a" />
        <path d="M5.500 14h5v5h-5z" fill="#2e9bdc" />
        <path d="M11.500 14h5v5h-5z" fill="#f2b52c" />
      </Svg>
    </TaskItem>
    <Slot $w={3} />
    <TaskItem $w={46}>
      <Svg w={24} h={22} color="none">
        <path d="M.5 7L12 0l11.500 7v3H.5z" fill="#1464b4" />
        <path d="M.5 7h23L12 15.500z" fill="#eef4f8" />
        <path d="M.5 7L12 15l11.500-8v14H.5z" fill="#2e9fe4" />
        <path d="M.5 21L12 13.500 23.500 21z" fill="#2389d2" />
      </Svg>
    </TaskItem>
    <TaskItem $w={45} $active $open>
      <svg width="21" height="20" viewBox="0 0 21 20">
        <path d="M10 2.500h10v15H10z" fill="#f4f7f4" />
        <path
          d="M12.500 5.500h2.500M16 5.500h3M12.500 8.500h2.500M16 8.500h3M12.500 11.500h2.500M16 11.500h3M12.500 14.500h2.500M16 14.500h3"
          stroke="#217346"
          strokeWidth="1.400"
        />
        <path d="M0 2l12-2v20L0 18z" fill="#1d7044" />
        <text x="2.500" y="14" fontSize="11" fontWeight="700" fill="#fff">
          X
        </text>
      </svg>
    </TaskItem>
    <Slot $w={5} />
    <TaskItem $w={38} $open>
      <Svg w={20} h={22} color="none">
        <path d="M4 5l3-3 3 3 1 7 1 9H5l1-9z" fill="#101112" />
        <circle cx="4" cy="4" r="2.800" fill="#85888a" />
        <path d="M2 9l6-3 3 5-3 2z" fill="#2c2f31" />
        <path d="M10 7h6v8h-6z" fill="#8db53c" />
        <path d="M15 9l4-2v7l-4-2z" fill="#a9c463" />
      </Svg>
    </TaskItem>
  </>
);

const SystemTray = () => (
  <Tray>
    <Slot $w={16}>
      <Svg w={12} h={7} color="#f2f2f2" sw={1.3}>
        <path d="M.7 6.300L6 1l5.300 5.300" />
      </Svg>
    </Slot>
    <Slot $w={30}>
      <Svg w={16} h={12} color="#f2f2f2">
        <path d="M5 2.500h9.500v7H3.500V7M15.500 4.500v3" />
        <path d="M6.500 4.500h6v3.500h-6z" fill="#fff" />
        <path d="M1 0v2M4 0v2M0 2.500h5v2.500L2.500 6.500 0 5zM2.500 6.500V9" />
      </Svg>
    </Slot>
    <Slot $w={17}>
      <Svg w={13} h={13} color="#e6e6e6" sw={1.2}>
        <path d="M.7 12C1 5.500 6 1 12.500.800M3.700 12.300C4 7.500 8 4 12.500 3.800M6.700 12.500c.3-3.500 3-5.500 5.800-5.700" />
        <circle cx="11" cy="11" r="1.500" fill="#fff" stroke="none" />
      </Svg>
    </Slot>
    <Slot $w={26}>
      <Svg w={16} h={13} color="#f2f2f2">
        <path d="M.5 4.500H3l3.500-3.500v11L3 8.500H.5zM8.500 4.500c1 1 1 3 0 4M10.500 2.500c2.300 2 2.300 6 0 8M12.500.800c3.500 3 3.500 8.500 0 11.500" />
      </Svg>
    </Slot>
    <Slot $w={30}>ESP</Slot>
    <Clock>
      <span>12:40 a. m.</span>
      <span>25/02/2020</span>
    </Clock>
    <Slot $w={42}>
      <svg width="24" height="31" viewBox="1 -7 24 31">
        <path d="M1 0h15v11.500H7L4.500 14v-2.500H1z" fill="#f6f6f6" />
        <path d="M4 3.500h9M4 6h9M4 8.500h9" stroke="#444" />
        <circle cx="15" cy="15" r="7.500" fill="#3a3b3c" stroke="#8d8f8f" />
        <text x="12" y="19" fontSize="11" fontWeight="700" fill="#fff">
          6
        </text>
      </svg>
    </Slot>
  </Tray>
);

const App = () => {
  return (
    <>
      <GlobalStyle />
      <Screen>
        <TitleBar>
          <QuickAccess />
          <WindowTitle>
            Ejercicios unidad II. Solución de ecuaciones no lineales.xlsx - Excel (Error de activación de productos)
          </WindowTitle>
          <Slot $w={16}>
            <Svg w={13} h={10} color="#eef5ef">
              <path d="M.5.500h12v9H.5zM0 2.500h13M6.500 9V4.500M4.500 6.500l2-2 2 2" />
            </Svg>
          </Slot>
          <Slot $w={28} $ml={23}>
            <Svg w={10} h={1} color="#eef5ef">
              <path d="M0 .5h10" />
            </Svg>
          </Slot>
          <Slot $w={28} $ml={15}>
            <Svg w={10} h={10} color="#eef5ef">
              <path d="M.5 2.500h7v7h-7zM2.500 2V.500h7v7H8" />
            </Svg>
          </Slot>
          <Slot $w={29} $ml={15}>
            <Svg w={10} h={10} color="#eef5ef">
              <path d="M.5.500l9 9M9.500.500l-9 9" />
            </Svg>
          </Slot>
          <Slot $w={3} />
        </TitleBar>

        <TabBar>
          {TABS.map(([text, w, ml]) => (
            <Tab key={text} $w={w} $ml={ml} $active={text === "Inicio"}>
              {text}
            </Tab>
          ))}
          <TellMe>
            <Svg w={10} h={14} color="#cfe3d5" sw={1.2}>
              <path d="M3 10C3 8 1 7.500 1 4.800c0-5.300 8-5.300 8 0C9 7.500 7 8 7 10zM3 11.500h4M3.500 13.200h3" />
            </Svg>
            ¿Qué desea hacer?
          </TellMe>
          <Slot $w={131}>Mtro. Ulises Girón Jiménez</Slot>
          <ShareButton>
            <Svg w={14} h={15} color="#f2f8f3" sw={1.5}>
              <circle cx="7" cy="4.500" r="3.700" />
              <path d="M.8 13.500c.3-3 2-4.500 4.200-5.500M8.500 8.200l1.500 1M10.500 9v5.500M7.800 11.700h5.500" />
            </Svg>
            Compartir
          </ShareButton>
        </TabBar>

        <Ribbon>
          <ClipboardGroup />
          <Divider />
          <FontGroup />
          <Divider />
          <AlignGroup />
          <Divider />
          <NumberGroup />
          <Divider />
          <StylesGroup />
          <Divider />
          <CellsGroup />
          <Divider />
          <EditGroup />
          <Divider />
          <Slot $w={18} $ml={25}>
            <Stack $pt={72}>
              <Svg w={8} h={6} color="#555" sw={1.6}>
                <path d="M.8 5L4 1.500 7.200 5" />
              </Svg>
            </Stack>
          </Slot>
        </Ribbon>

        <FormulaBar>
          <Field $w={96} $pad="0 6px 0 6px">
            D11
            <Svg w={7} h={4} color="none">
              <path d="M0 0h7L3.500 4z" fill="#777" />
            </Svg>
          </Field>
          <Slot $w={28}>
            <Svg w={2} h={11} color="none">
              <path d="M0 0h2v2H0zM0 4.500h2v2H0zM0 9h2v2H0z" fill="#a9aba9" />
            </Svg>
          </Slot>
          <Field $w={104} $pad="0 10px 0 12px">
            <Svg w={11} h={10} color="#777" sw={1.5}>
              <path d="M.8.500l9.400 9M10.200.500L.8 9.500" />
            </Svg>
            <Svg w={13} h={10} color="#777" sw={2.3}>
              <path d="M1 5.500l3.500 3L12 1" />
            </Svg>
            <svg
              width="13"
              height="14"
              viewBox="0 0 13 14"
              fill="#666"
              fontFamily="'Liberation Serif', serif"
              fontStyle="italic"
              fontWeight="700"
            >
              <text x="1" y="11" fontSize="13">f</text>
              <text x="6" y="12" fontSize="10">x</text>
            </svg>
          </Field>
          <Field $ml={3} $pad="0 5px 0 10px">
            =D11
            <Svg w={6} h={5} color="#666" sw={1.6}>
              <path d="M.8.800L3 3.300 5.200.800" />
            </Svg>
          </Field>
        </FormulaBar>

        <Worksheet />

        <SheetTabs>
          <Slot $w={91} $align="flex-start">
            <Slot $w={49} $h={24}>
              <Svg w={4} h={6} color="none">
                <path d="M4 0v6L0 3z" fill="#bcbebc" />
              </Svg>
            </Slot>
            <Slot $w={6} $h={24}>
              <Svg w={4} h={6} color="none">
                <path d="M0 0v6l4-3z" fill="#bcbebc" />
              </Svg>
            </Slot>
          </Slot>
          <TabRule />
          <SheetTab $w={76}>Bisección</SheetTab>
          <TabRule />
          <SheetTab $w={120}>Newton Raphson</SheetTab>
          <SheetTab $w={67} $active>
            Secante
          </SheetTab>
          <Slot $w={78} $h={24}>
            <Svg w={16} h={16} color="#777">
              <circle cx="8" cy="8" r="7" />
              <path d="M8 4.500v7M4.500 8h7" strokeWidth="1.500" />
            </Svg>
          </Slot>
          <Slot $w={351} $h={25} $align="flex-end">
            <Slot $w={30}>
              <Svg w={2} h={10} color="none">
                <path d="M0 0h2v2H0zM0 4h2v2H0zM0 8h2v2H0z" fill="#b5b7b5" />
              </Svg>
            </Slot>
          </Slot>
          <HScroll>
            <HPart $w={14}>
              <Svg w={4} h={6} color="none">
                <path d="M4 0v6L0 3z" fill="#555" />
              </Svg>
            </HPart>
            <HPart $w={414} />
            <HPart $w={14} $ml={38}>
              <Svg w={4} h={6} color="none">
                <path d="M0 0v6l4-3z" fill="#555" />
              </Svg>
            </HPart>
          </HScroll>
        </SheetTabs>

        <StatusBar>
          <StatusText>Señalar</StatusText>
          <Slot $w={36}>
            <Svg w={12} h={12} color="#777">
              <path d="M.5.500h11v11H.5zM4 0v12M8 0v12M0 4h12M0 8h12" />
            </Svg>
          </Slot>
          <Slot $w={36}>
            <Svg w={13} h={13} color="#777">
              <path d="M.5.500h12v12H.5zM3.500 2.500h6v8h-6zM5 4.500h3M5 6.500h3M5 8.500h3" />
            </Svg>
          </Slot>
          <Slot $w={36}>
            <Svg w={13} h={12} color="#777">
              <path d="M.5.500h12v11H.5zM4.500 0v7M9 0v7M0 7h9" />
            </Svg>
          </Slot>
          <Slot $w={124}>
            <Svg w={116} h={9} color="#9a9c9a">
              <path d="M0 4.500h7" strokeWidth="1.600" />
              <path d="M10 4.500h94M57.500 2v5" />
              <path d="M108 4.500h8M112 .5v8" strokeWidth="1.600" />
            </Svg>
          </Slot>
          <Zoom>120 %</Zoom>
        </StatusBar>

        <Taskbar>
          <StartButton $w={42}>
            <Svg w={16} h={16} color="none">
              <path
                d="M0 2.300l7-1v6.200H0zM8 1.200L16 0v7.500H8zM0 8.500h7v6.200l-7-1zM8 8.500h8V16l-8-1.200z"
                fill="#f6f6f6"
              />
            </Svg>
          </StartButton>
          <SearchBox>
            <Svg w={15} h={15} color="#444" sw={1.3}>
              <circle cx="9.500" cy="5.500" r="4.700" />
              <path d="M6 9L.8 14.200" />
            </Svg>
            Escribe aquí para buscar
          </SearchBox>
          <TaskIcons />
          <SystemTray />
        </Taskbar>

        <EdgeStrip>
          <Stripe $h={51} $kind="busy" />
          <Stripe $h={153} $kind="plain" />
          <Stripe $h={35} $kind="dark" />
          <Stripe $h={169} $kind="pale" />
          <Stripe $h={22} $kind="white" />
          <Stripe $h={41} $kind="muted" />
          <Stripe $h={163} $kind="white" />
        </EdgeStrip>
      </Screen>
    </>
  );
};

export default App;
